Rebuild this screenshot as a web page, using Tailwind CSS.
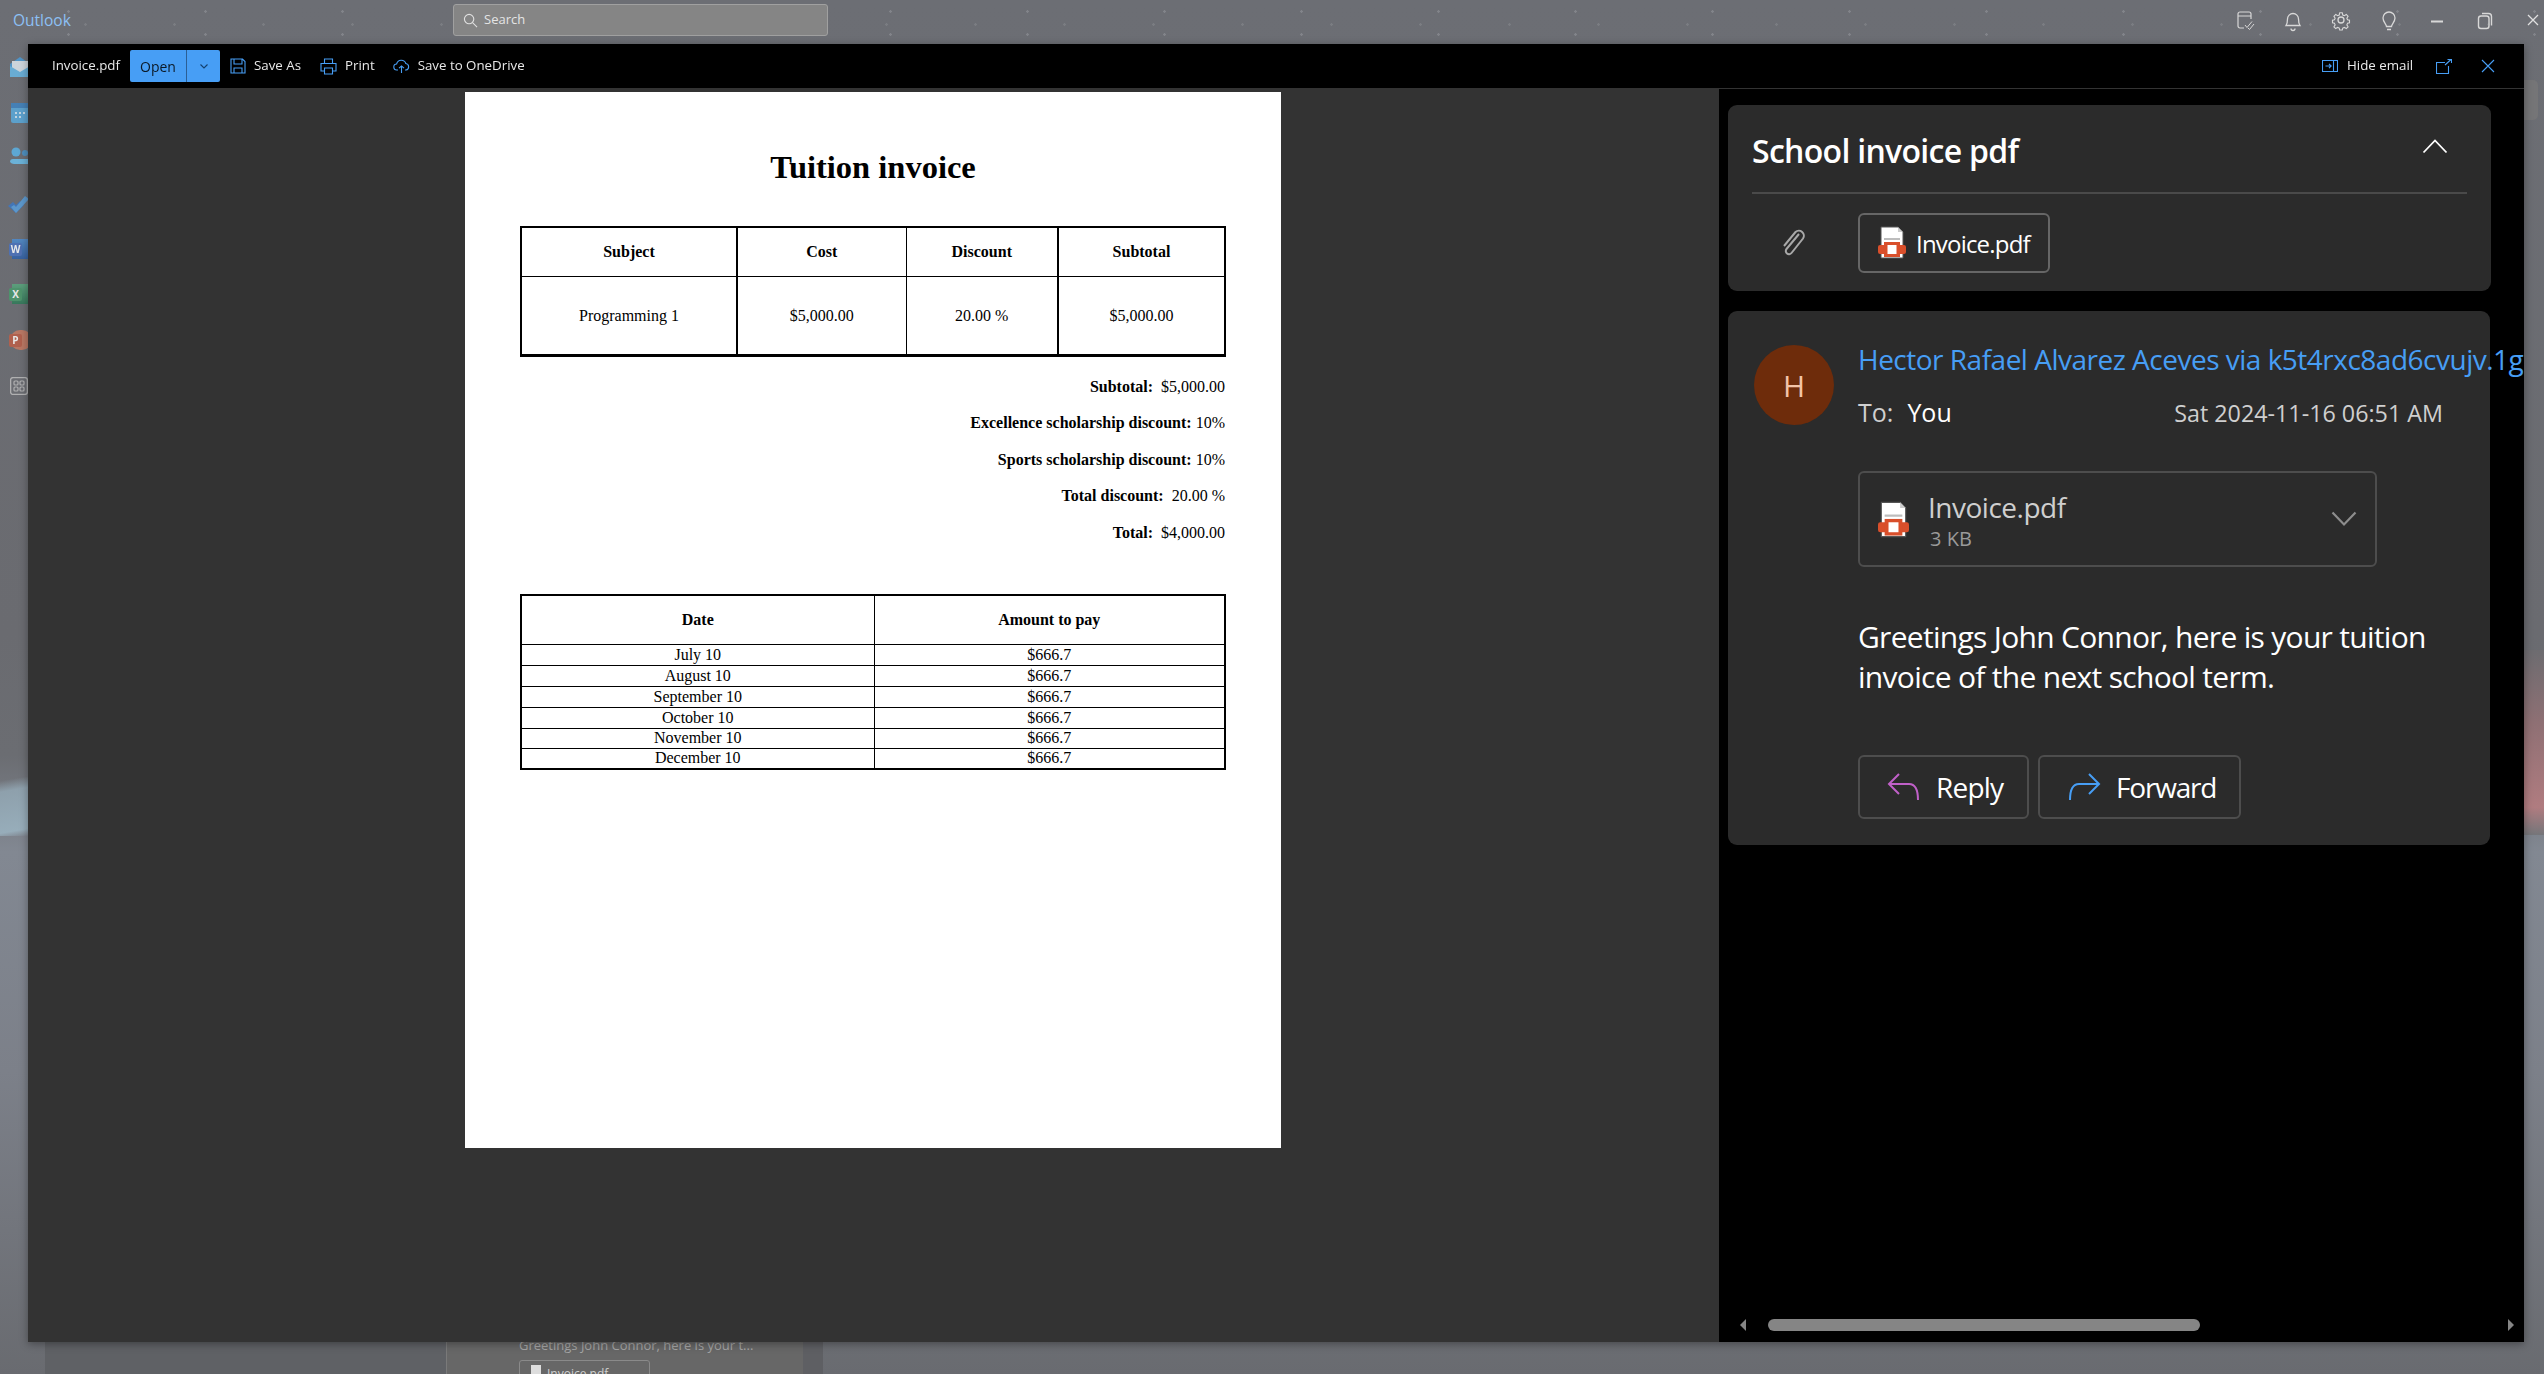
<!DOCTYPE html>
<html lang="en">
<head>
  <meta charset="UTF-8" />
  <title>Outlook - Invoice.pdf</title>
  <script src="https://cdn.jsdelivr.net/npm/@tailwindcss/browser@4"></script>
</head>
<body class="relative w-[2544px] h-[1374px] overflow-hidden font-['Open_Sans',sans-serif] bg-[linear-gradient(180deg,#6c6e74_0%,#6a6b70_46%,#6b6d72_55%,#828892_62%,#7c8089_78%,#696b70_100%)]">

  <!-- wallpaper waves on both sides -->
  <div class="absolute left-0 top-[766px] w-[28px] h-[70px] bg-[linear-gradient(170deg,transparent_20%,#8ea0ac_35%,#97adba_90%,transparent_100%)]"></div>
  <div class="absolute right-0 top-[650px] w-[20px] h-[185px] bg-[linear-gradient(180deg,#6d6c70_0%,#8f7074_40%,#b07c80_85%,#75767a_100%)]"></div>

  <!-- speckles in the wallpaper -->
  <div class="absolute left-0 top-0 w-full h-[44px] opacity-30 bg-[radial-gradient(circle,#b5b7bc_1px,transparent_1.5px)] bg-[size:137px_23px]"></div>
  <div class="absolute left-0 top-0 w-full h-[44px] opacity-20 bg-[radial-gradient(circle,#b5b7bc_1px,transparent_1.5px)] bg-[size:89px_31px] bg-[position:41px_9px]"></div>

  <!-- outlook window behind the preview -->
  <header class="relative h-[44px] flex items-center">
    <span class="ml-[13px] -mt-[3px] text-[15.5px] font-medium text-[#8cc0f5]">Outlook</span>
    <div class="absolute left-[453px] top-[4px] w-[375px] h-[32px] flex items-center gap-[6px] pl-[9px] rounded-[3px] border border-[#a0a0a0] bg-[#858585] text-[13px] text-[#e4e4e4]">
      <svg class="w-[15px] h-[15px]" viewBox="0 0 16 16" fill="none" stroke="#e0e0e0" stroke-width="1.2"><circle cx="6.5" cy="6.5" r="5"/><path d="M10.2 10.2 15 15"/></svg>
      Search
    </div>
    <div class="absolute left-[2233px] top-[8px] flex items-center gap-[24px]">
      <svg class="w-[24px] h-[24px]" viewBox="0 0 24 24" fill="none" stroke="#d8d8d8" stroke-width="1.2"><path d="M11 20H7a2 2 0 0 1-2-2V6a2 2 0 0 1 2-2h9a2 2 0 0 1 2 2v5M5 8h13"/><path d="m12 17 2 2.500 5-6M15 20l1.500 1.500 4.500-5.500" stroke-width="1"/></svg>
      <svg class="w-[24px] h-[24px]" viewBox="0 0 24 24" fill="none" stroke="#d8d8d8" stroke-width="1.3"><path d="M5 17.500c1-1.500 1.500-3 1.500-6.500a5.500 5.500 0 0 1 11 0c0 3.500.5 5 1.500 6.500zM10 20.500a2 2 0 0 0 4 0"/></svg>
      <svg class="w-[24px] h-[24px]" viewBox="0 0 24 24" fill="none" stroke="#d8d8d8" stroke-width="1.3"><circle cx="12" cy="12" r="3"/><path d="m10.500 3.500h3l.6 2.600 1.800.8 2.300-1.400 2.100 2.100-1.400 2.300.8 1.800 2.300.6v3l-2.300.6-.8 1.800 1.400 2.300-2.100 2.100-2.300-1.400-1.800.8-.6 2.300h-3l-.6-2.300-1.800-.8-2.300 1.400-2.100-2.100 1.400-2.300-.8-1.800-2.300-.6v-3l2.300-.6.8-1.800-1.400-2.300 2.100-2.100 2.300 1.400 1.800-.8z" transform="translate(1.800 1.800) scale(.85)"/></svg>
      <svg class="w-[24px] h-[24px]" viewBox="0 0 24 24" fill="none" stroke="#d8d8d8" stroke-width="1.3"><path d="M9.500 18.500c0-2.500-3.500-4.500-3.500-8.500a6 6 0 0 1 12 0c0 4-3.500 6-3.500 8.500zM10 21.500h4"/></svg>
      <svg class="w-[24px] h-[24px]" viewBox="0 0 24 24" fill="none" stroke="#d8d8d8" stroke-width="2"><path d="M6 13.500h12"/></svg>
      <svg class="w-[24px] h-[24px]" viewBox="0 0 24 24" fill="none" stroke="#d8d8d8" stroke-width="1.4"><rect x="5.500" y="8" width="10.500" height="12.500" rx="2.500"/><path d="M9 5.500h6.500a3 3 0 0 1 3 3v9"/></svg>
      <svg class="w-[24px] h-[24px]" viewBox="0 0 24 24" fill="none" stroke="#e0e0e0" stroke-width="1.3"><path d="m7 7 10 10M17 7 7 17"/></svg>
    </div>
  </header>

  <!-- app rail, cut off by the preview -->
  <nav class="absolute left-0 top-[45px] w-[28px] overflow-hidden flex flex-col items-start pl-[9px] opacity-85">
    <div class="h-[45.500px] flex items-center">
      <svg class="shrink-0 w-[24px] h-[22px] -mt-[1px]" viewBox="0 0 24 22"><path d="M1 8 11 1l10 7v13H1z" fill="#4d9bd6"/><path d="M3 5h16v9l-8 4-8-4z" fill="#dfe7ee"/><path d="M1 10l10 6 10-6v11H1z" fill="#69b7e6"/></svg>
    </div>
    <div class="h-[45.500px] flex items-center">
      <svg class="shrink-0 w-[18px] h-[20px] ml-[2px]" viewBox="0 0 18 20"><rect width="18" height="20" rx="2" fill="#5aa9dc"/><rect width="18" height="5" fill="#3f84c2"/><path d="M4 9h2v2H4zM8 9h2v2H8zM12 9h2v2h-2zM4 13h2v2H4zM8 13h2v2H8z" fill="#cfe6f5"/></svg>
    </div>
    <div class="h-[45.500px] flex items-center">
      <svg class="shrink-0 w-[19px] h-[24px] ml-[1px]" viewBox="0 0 19 24"><circle cx="6" cy="5" r="4.500" fill="#5bb2e6"/><circle cx="15" cy="6" r="3" fill="#4a95cc"/><path d="M0 15a3 3 0 0 1 3-3h16v5H5a5 5 0 0 1-5-2z" fill="#6cbdea"/></svg>
    </div>
    <div class="h-[45.500px] flex items-center">
      <svg class="shrink-0 w-[20px] h-[22px] -ml-[1px]" viewBox="0 0 20 22"><path d="m0 13 5-4 3 3 4-4 4 4-8 8z" fill="#3d78c4"/><path d="m8 20-5-6 3-2 2 2L17 3l4 3z" fill="#5a9fdc"/></svg>
    </div>
    <div class="h-[45.500px] flex items-center">
      <div class="shrink-0 relative w-[19px] h-[22px]">
        <div class="absolute left-[3px] top-0 w-[16px] h-[20px] bg-[linear-gradient(180deg,#4f8dd0,#2f5fa8)]"></div>
        <div class="absolute left-0 top-[4px] w-[13px] h-[13px] rounded-[2px] bg-[#4b72bf] text-[10px] leading-[13px] text-center font-bold text-white">W</div>
      </div>
    </div>
    <div class="h-[45.500px] flex items-center">
      <div class="shrink-0 relative w-[19px] h-[22px]">
        <div class="absolute left-[3px] top-0 w-[16px] h-[20px] bg-[linear-gradient(180deg,#5ba87f,#2f7a58)]"></div>
        <div class="absolute left-0 top-[4px] w-[13px] h-[13px] rounded-[2px] bg-[#4a9a6c] text-[10px] leading-[13px] text-center font-bold text-white">X</div>
      </div>
    </div>
    <div class="h-[45.500px] flex items-center">
      <div class="shrink-0 relative w-[19px] h-[22px]">
        <div class="absolute left-[1px] top-0 w-[22px] h-[20px] rounded-full bg-[#c77a62]"></div>
        <div class="absolute left-0 top-[4px] w-[13px] h-[13px] rounded-[2px] bg-[#bd5f48] text-[10px] leading-[13px] text-center font-bold text-white">P</div>
      </div>
    </div>
    <div class="h-[45.500px] flex items-center">
      <svg class="shrink-0 w-[18px] h-[18px] ml-[1px]" viewBox="0 0 18 18" fill="none" stroke="#bdbdbd" stroke-width="1.200"><rect x=".6" y=".6" width="16.800" height="16.800" rx="2.500" stroke-width="1.400"/><rect x="4" y="4" width="4" height="4" rx="1"/><rect x="10" y="4" width="4" height="4" rx="1"/><rect x="4" y="10" width="4" height="4" rx="1"/><rect x="10" y="10" width="4" height="4" rx="1"/></svg>
    </div>
  </nav>

  <!-- bits of the window that peek out under and beside the preview -->
  <div class="absolute left-[45px] top-[1342px] w-[401px] h-[32px] bg-[#5f6165]"></div>
  <div class="absolute left-[446px] top-[1300px] w-[357px] h-[74px] bg-[#676767] border-l border-[#7a7a7a] pl-[72px] pt-[35px]">
    <p class="text-[13px] leading-[20px] text-[#a5a5a5] whitespace-nowrap">Greetings John Connor, here is your t...</p>
    <div class="mt-[5px] w-[131px] h-[30px] border border-[#8a8a8a] rounded-[3px] pl-[11px] pt-[4px] flex gap-[6px] text-[12px] text-[#d0d0d0]">
      <span class="w-[10px] h-[14px] bg-[#dddddd]"></span>Invoice.pdf
    </div>
  </div>
  <div class="absolute left-[803px] top-[1342px] w-[20px] h-[32px] bg-[#5e5f63]"></div>
  <div class="absolute left-[2524px] top-[80px] w-[14px] h-[40px] rounded-r-[5px] bg-[#757577]"></div>

  <!-- attachment preview -->
  <main class="absolute left-[28px] top-[44px] w-[2496px] h-[1298px] flex flex-col bg-black shadow-[0_2px_8px_rgba(0,0,0,0.35)]">
    <div class="h-[45px] shrink-0 flex items-center border-b border-[#333333] text-[13.300px] text-[#e8e8e8]">
      <span class="ml-[24px] w-[78px]">Invoice.pdf</span>
      <div class="w-[90px] h-[32px] flex rounded-[2px] bg-[#479ef5] text-black/85">
        <span class="w-[57px] flex items-center justify-center text-[14px] pt-[1px] border-r border-[#2b5f95]">Open</span>
        <span class="flex-1 flex items-center justify-center">
          <svg class="w-[10px] h-[10px]" viewBox="0 0 10 10" fill="none" stroke="#14406e" stroke-width="1.100"><path d="m1.500 3.500 3.500 3.500 3.500-3.500"/></svg>
        </span>
      </div>
      <svg class="ml-[10px] w-[16px] h-[16px]" viewBox="0 0 16 16" fill="none" stroke="#479ef5" stroke-width="1.100"><path d="M1 1h11.500L15 3.500V15H1zM4 1v5h8V1M4 15V10h8v5"/></svg>
      <span class="ml-[8px]">Save As</span>
      <svg class="ml-[19px] w-[17px] h-[17px]" viewBox="0 0 17 17" fill="none" stroke="#479ef5" stroke-width="1.100"><path d="M4.500 5V1h8v4M4 13H1V5.500h15V13h-3M4.500 10h8v6h-8z"/></svg>
      <span class="ml-[8px]">Print</span>
      <svg class="ml-[18px] w-[17px] h-[16px]" viewBox="0 0 17 16" fill="none" stroke="#479ef5" stroke-width="1.100"><path d="M5 12H4a3 3 0 0 1-.4-6A4.800 4.800 0 0 1 12.800 5.500 3.300 3.300 0 0 1 13 12h-1M8.500 15V8M6 10.200 8.500 8 11 10.200"/></svg>
      <span class="ml-[8px]">Save to OneDrive</span>
      <div class="ml-auto flex items-center">
        <svg class="w-[16px] h-[12px]" viewBox="0 0 16 12" fill="none" stroke="#479ef5" stroke-width="1.100"><path d="M.5.500h15v11H.5zM11.500.500v11M3.500 6h5.500M7 3.800 9.200 6 7 8.200"/></svg>
        <span class="ml-[9px] w-[89px]">Hide email</span>
        <svg class="w-[16px] h-[15px]" viewBox="0 0 16 15" fill="none" stroke="#479ef5" stroke-width="1.100"><path d="M9 3.500H.5v11h12V7M9 6l6-5.500M11.500.500H15.500V4"/></svg>
        <svg class="ml-[29px] mr-[29px] w-[14px] h-[14px]" viewBox="0 0 14 14" fill="none" stroke="#479ef5" stroke-width="1.100"><path d="m1 1 12 12M13 1 1 13"/></svg>
      </div>
    </div>

    <div class="flex-1 flex min-h-0">
      <!-- pdf page -->
      <section class="flex-1 bg-[#333333] pt-[3px]">
        <article class="ml-[437px] w-[816px] h-[1056px] bg-white px-[55px] pt-[55px] text-black font-['Liberation_Serif',serif]">
          <h1 class="h-[42px] leading-[41px] text-center text-[32.500px] font-bold">Tuition invoice</h1>
          <table class="mt-[37px] w-[706px] table-fixed border-collapse border-2 border-black text-[16px]">
            <tr class="h-[49px] font-bold">
              <th class="w-[216px] border-b border-r-2 border-black">Subject</th>
              <th class="w-[169px] border-b border-r border-black">Cost</th>
              <th class="w-[152px] border-b border-r-2 border-black">Discount</th>
              <th class="border-b border-black">Subtotal</th>
            </tr>
            <tr class="h-[79px] text-center border-b-3 border-black">
              <td class="pt-[1px] border-r-2 border-black">Programming 1</td>
              <td class="pt-[1px] border-r border-black">$5,000.00</td>
              <td class="pt-[1px] border-r-2 border-black">20.00 %</td>
              <td class="pt-[1px]">$5,000.00</td>
            </tr>
          </table>
          <dl class="mt-[12px] w-[705px] text-right text-[16px] leading-[36.500px]">
            <div><b>Subtotal:</b>&nbsp; $5,000.00</div>
            <div><b>Excellence scholarship discount:</b> 10%</div>
            <div><b>Sports scholarship discount:</b> 10%</div>
            <div><b>Total discount:</b>&nbsp; 20.00 %</div>
            <div><b>Total:</b>&nbsp; $4,000.00</div>
          </dl>
          <table class="mt-[43px] w-[706px] table-fixed border-collapse border-2 border-black text-[16px] leading-[18px] text-center">
            <tr class="h-[49px] font-bold border-b border-black">
              <th class="w-[353px] border-r border-black">Date</th>
              <th>Amount to pay</th>
            </tr>
            <tr class="h-[21px] border-b border-black"><td class="border-r border-black">July 10</td><td>$666.7</td></tr>
            <tr class="h-[21px] border-b border-black"><td class="border-r border-black">August 10</td><td>$666.7</td></tr>
            <tr class="h-[21px] border-b border-black"><td class="border-r border-black">September 10</td><td>$666.7</td></tr>
            <tr class="h-[21px] border-b border-black"><td class="border-r border-black">October 10</td><td>$666.7</td></tr>
            <tr class="h-[20px] border-b border-black"><td class="border-r border-black">November 10</td><td>$666.7</td></tr>
            <tr class="h-[21px] border-b-2 border-black"><td class="border-r border-black">December 10</td><td>$666.7</td></tr>
          </table>
        </article>
      </section>

      <!-- email pane -->
      <aside class="relative w-[805px] shrink-0 overflow-hidden bg-black pl-[9px] pt-[16px]">
        <div class="w-[763px] h-[186px] rounded-[9px] bg-[#2b2b2b] px-[24px]">
          <div class="h-[89px] flex items-center justify-between border-b-2 border-[#4a4a4a] pr-[19px]">
            <h2 class="mt-[5px] text-[32px] font-semibold text-white tracking-[-0.7px]">School invoice pdf</h2>
            <svg class="w-[26px] h-[16px] -mt-[6px]" viewBox="0 0 26 16" fill="none" stroke="#ffffff" stroke-width="1.800"><path d="m1.500 14.500 11.500-12 11.500 12"/></svg>
          </div>
          <div class="flex items-center h-[95px]">
            <svg class="ml-[28px] mt-[2px] w-[28px] h-[30px]" viewBox="0 0 28 30" fill="none" stroke="#a8a8a8" stroke-width="2"><path d="M19 6 6.500 21a3.200 3.200 0 0 0 5 4L23 10.500a5 5 0 0 0-7.500-6.500L4 18"/></svg>
            <button class="ml-[50px] mt-[2px] w-[192px] h-[60px] flex items-center rounded-[6px] border-2 border-[#666666] text-[24px] tracking-[-0.8px] text-white">
              <svg class="ml-[18px] w-[28px] h-[33px]" viewBox="0 0 28 33"><path d="M3 1h17l5 5v26H3z" fill="#fff" stroke="#555" stroke-width="1"/><path d="M20 1v5h5z" fill="#ccc"/><rect x="6" y="12" width="16" height="2" fill="#bdbdbd"/><rect x="0" y="19" width="28" height="9" rx="2" fill="#d94f2b"/><rect x="6" y="16" width="16" height="15" fill="#d94f2b"/><rect x="9.500" y="19" width="9" height="9" fill="#fff"/></svg>
              <span class="ml-[10px] pt-[2px]">Invoice.pdf</span>
            </button>
          </div>
        </div>

        <div class="mt-[20px] w-[762px] h-[534px] rounded-[9px] bg-[#2b2b2b] pl-[130px] relative">
          <div class="absolute left-[26px] top-[34px] w-[80px] h-[80px] rounded-full bg-[#6e2c0b] flex items-center justify-center text-[30px] font-medium text-[#f2c4a8]">H</div>
          <p class="pt-[28px] text-[28px] leading-[40px] font-medium text-[#479ef5] whitespace-nowrap tracking-[-0.5px]">Hector Rafael Alvarez Aceves via k5t4rxc8ad6cvujv.1g</p>
          <div class="mt-[14px] h-[40px] flex items-center pr-[47px] text-[#cfcfcf] text-[25px]">
            <span>To:</span>
            <span class="ml-[14px] text-white">You</span>
            <span class="ml-auto text-[23.300px] mt-[1px]">Sat 2024-11-16 06:51 AM</span>
          </div>
          <div class="mt-[38px] w-[519px] h-[96px] flex items-center rounded-[6px] border-2 border-[#4d4d4d]">
            <svg class="ml-[18px] w-[31px] h-[37px]" viewBox="0 0 28 33"><path d="M3 1h17l5 5v26H3z" fill="#fff" stroke="#555" stroke-width="1"/><path d="M20 1v5h5z" fill="#ccc"/><rect x="6" y="12" width="16" height="2" fill="#bdbdbd"/><rect x="0" y="19" width="28" height="9" rx="2" fill="#d94f2b"/><rect x="6" y="16" width="16" height="15" fill="#d94f2b"/><rect x="9.500" y="19" width="9" height="9" fill="#fff"/></svg>
            <div class="ml-[19px] pt-[3px]">
              <div class="text-[28px] leading-[36px] text-[#cfcfcf] tracking-[-0.5px]">Invoice.pdf</div>
              <div class="text-[20px] leading-[28px] pl-[2px] text-[#9a9a9a]">3 KB</div>
            </div>
            <svg class="ml-auto mr-[18px] w-[26px] h-[16px]" viewBox="0 0 26 16" fill="none" stroke="#8d8d8d" stroke-width="2.200"><path d="m1.500 1.500 11.500 12 11.500-12"/></svg>
          </div>
          <p class="mt-[50px] w-[600px] text-[30px] leading-[40px] text-white tracking-[-0.7px]">Greetings John Connor, here is your tuition invoice of the next school term.</p>
          <div class="mt-[58px] flex gap-[9px] text-[28px] text-white">
            <button class="w-[171px] h-[64px] flex items-center rounded-[6px] border-2 border-[#4d4d4d] tracking-[-0.8px]">
              <svg class="ml-[27px] w-[34px] h-[30px]" viewBox="0 0 34 30" fill="none" stroke="#c060c8" stroke-width="2"><path d="M12 2 2 12l10 10M2 12h20c6 0 9 5 9 16"/></svg>
              <span class="ml-[15px]">Reply</span>
            </button>
            <button class="w-[203px] h-[64px] flex items-center rounded-[6px] border-2 border-[#4d4d4d] tracking-[-1.2px]">
              <svg class="ml-[27px] w-[34px] h-[30px]" viewBox="0 0 34 30" fill="none" stroke="#479ef5" stroke-width="2"><path d="m22 2 10 10-10 10M32 12H12C6 12 3 17 3 28"/></svg>
              <span class="ml-[15px]">Forward</span>
            </button>
          </div>
        </div>

        <!-- horizontal scrollbar -->
        <svg class="absolute left-[21px] bottom-[11px] w-[6px] h-[12px]" viewBox="0 0 6 12"><path d="M6 0v12L0 6z" fill="#858585"/></svg>
        <div class="absolute left-[49px] bottom-[11px] w-[432px] h-[12px] rounded-full bg-[#858585]"></div>
        <svg class="absolute right-[10px] bottom-[11px] w-[6px] h-[12px]" viewBox="0 0 6 12"><path d="M0 0v12l6-6z" fill="#858585"/></svg>
      </aside>
    </div>
  </main>
</body>
</html>
